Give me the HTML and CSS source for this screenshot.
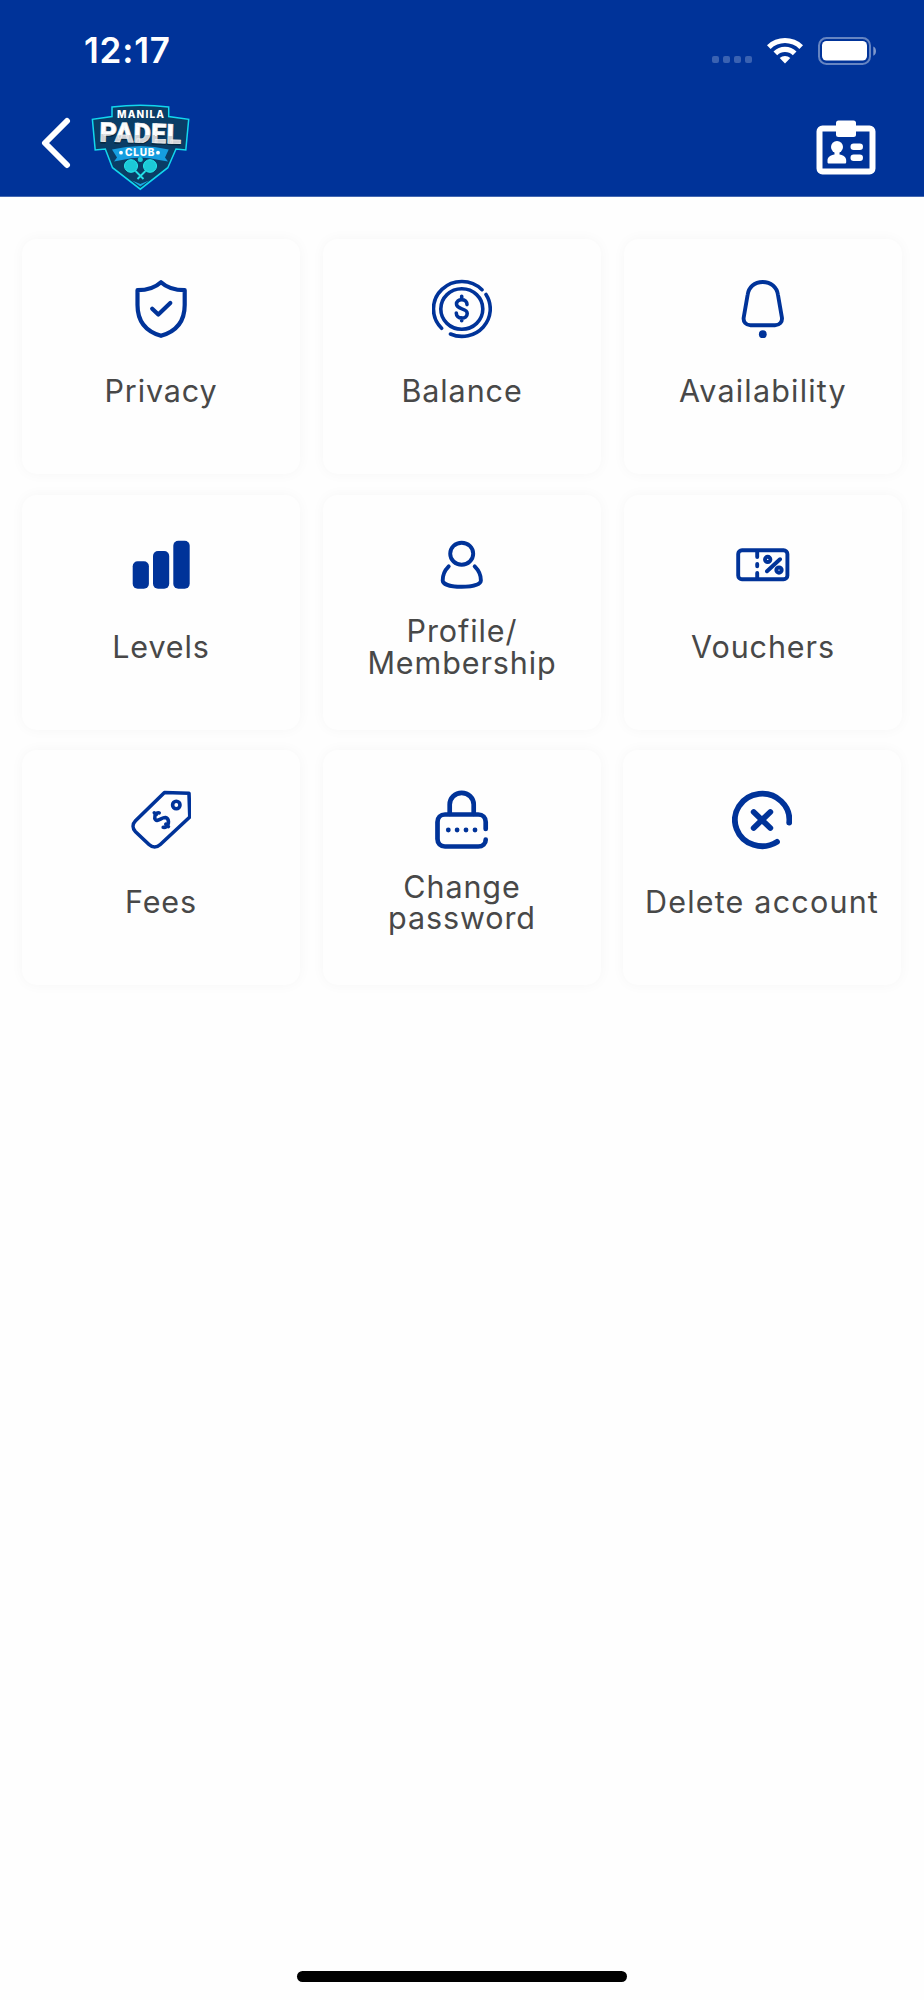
FILE: index.html
```html
<!DOCTYPE html>
<html lang="en">
<head>
  <meta charset="UTF-8">
  <meta name="viewport" content="width=device-width, initial-scale=1.0">
  <title>Manila Padel Club</title>
  <link rel="stylesheet" href="styles.css">
</head>
<body>
  <header class="header">
    <div class="status-bar">
      <span class="time">12:17</span>
      <div class="status-icons">
        <div class="signal"><i></i><i></i><i></i><i></i></div>
        <svg class="wifi" viewBox="0 0 36 27">
          <path d="M0 8.200a26 26 0 0 1 36 0l-3.600 3.700a20.500 20.500 0 0 0-28.800 0z"/>
          <path d="M6.500 14.500a16.500 16.500 0 0 1 23 0l-3.700 3.700a11.200 11.200 0 0 0-15.600 0z"/>
          <path d="M12.700 21a7.800 7.800 0 0 1 10.600 0L18 26.500z"/>
        </svg>
        <svg class="battery" viewBox="0 0 59 28">
          <rect class="shell" x="1" y="1" width="51" height="26" rx="7.500"/>
          <rect x="4" y="4" width="45" height="19.500" rx="4.500"/>
          <path class="tip" d="M55.300 9.500c3.600 1.500 3.600 7.800 0 9.300z"/>
        </svg>
      </div>
    </div>
    <div class="nav-bar">
      <svg class="back" viewBox="0 0 30 52">
        <path d="M26 4L4 26l22 22"/>
      </svg>
      <svg class="logo" viewBox="0 0 100 88">
        <defs>
          <linearGradient id="silver" x1="0" y1="0" x2="0" y2="1">
            <stop offset="0.55" stop-color="#ffffff"/>
            <stop offset="0.55" stop-color="#cfd2d6"/>
          </linearGradient>
        </defs>
        <path class="crest" d="M21 2.900Q49.300-.300 77.700 2.900V12.500L97.700 15.300 94.800 46 85 45 76.800 63.700 49.300 85.200 21.500 63.700 14.300 45 4.200 46 1.400 15.300 21 12.500z"/>
        <text class="logo-manila" x="26" y="13.800" textLength="47">MANILA</text>
        <g transform="rotate(1.500 49 30)">
          <text class="logo-padel shade" x="8.500" y="40" textLength="81.500">PADEL</text>
          <text class="logo-padel" x="8.500" y="38.500" textLength="81.500">PADEL</text>
        </g>
        <path class="ribbon" d="M21 45.500Q49.300 38.500 77.700 45.500L74 53.500 77 57.500 68 56Q49.300 51 31 56L23 57.500 26 53.500z"/>
        <circle class="dot" cx="30" cy="48.700" r="1.900"/>
        <circle class="dot" cx="67" cy="48.700" r="1.900"/>
        <text class="logo-club" x="34" y="52" textLength="29.500">CLUB</text>
        <circle class="ball" cx="49.300" cy="55.500" r="2.500"/>
        <path class="handle" d="M44.500 67l8 8M54.500 67l-8 8"/>
        <ellipse class="racket" cx="40" cy="62" rx="6.500" ry="6.300"/>
        <ellipse class="racket" cx="59" cy="62" rx="6.500" ry="6.300"/>
        <path class="chevron" d="M41 76.500l8.300 3.500 8.700-3.500-8.700 6z"/>
      </svg>
      <svg class="id-card" viewBox="0 0 60 56">
        <rect class="frame" x="3.500" y="8.500" width="53" height="43" rx="3"/>
        <rect x="20" y="0.500" width="20" height="16.500" rx="2.500"/>
        <circle cx="21" cy="27" r="6"/>
        <path d="M18.500 30h5v4.500c4 .500 6.700 2.500 6.700 6v1.500c0 1-.500 1.500-1.500 1.500H13c-1 0-1.500-.500-1.500-1.500v-1.500c0-3.500 3-5.500 7-6z"/>
        <rect x="34.500" y="23.500" width="12.500" height="6.500" rx="3.200"/>
        <rect x="34.500" y="34.500" width="12.500" height="6.500" rx="3.200"/>
      </svg>
    </div>
  </header>

  <main class="menu">
    <a class="card">
      <svg class="icon" viewBox="0 0 60 60" stroke-width="4.200">
        <path d="M30 3.200C24 8.800 16.500 11.200 6.500 11.200V26C6.500 42 15 52.500 30 56.800 45 52.500 53.700 42 53.700 26V11.200C43.500 11.200 36 8.800 30 3.200z"/>
        <path d="M21.200 29.700l6.100 5.800 12-11.500"/>
      </svg>
      <span class="label">Privacy</span>
    </a>
    <a class="card">
      <svg class="icon" viewBox="0 0 60 60" stroke-width="3.600">
        <path d="M50 10.700A28 27.200 0 0 0 9.600 49.300"/>
        <path d="M54 15.500A28.300 27.400 0 0 1 18.500 55"/>
        <ellipse cx="29.800" cy="30" rx="21" ry="20.300"/>
        <path d="M29.700 17.300v3M29.700 38.800v3M35 25.600c0-3-2-5-5.300-5-3 0-5.200 1.800-5.200 4.500 0 6 10.700 3.500 10.700 9.300 0 2.800-2.200 4.700-5.400 4.700-3.300 0-5.500-2-5.500-5"/>
      </svg>
      <span class="label">Balance</span>
    </a>
    <a class="card">
      <svg class="icon" viewBox="0 0 60 60" stroke-width="3.900">
        <path d="M29.700 3C21.500 3 15.700 8.200 14.600 16L10.700 38.500C10 43 13 46.200 17.500 46.200H42C46.500 46.200 49.600 43 48.900 38.500L45 16C43.900 8.200 37.900 3 29.700 3z"/>
        <circle class="solid" cx="29.800" cy="55.200" r="3.900"/>
      </svg>
      <span class="label wide">Availability</span>
    </a>

    <a class="card">
      <svg class="icon" viewBox="0 0 60 60">
        <rect class="solid" x="1.700" y="26.300" width="16.200" height="27.400" rx="5"/>
        <rect class="solid" x="22" y="16" width="16.200" height="37.700" rx="5"/>
        <rect class="solid" x="42.300" y="5.700" width="16.400" height="48" rx="5"/>
      </svg>
      <span class="label">Levels</span>
    </a>
    <a class="card">
      <svg class="icon" viewBox="0 0 60 60" stroke-width="3.900">
        <ellipse cx="29.700" cy="18.700" rx="11.500" ry="11"/>
        <path d="M16.700 31.300C12.500 35.500 10.600 40 10.700 45.500 11 49.500 19 51.800 29.700 51.800S48.700 49.500 48.900 45.500C49 40 46.900 35.500 42.700 31.300"/>
      </svg>
      <span class="label">Profile/<br>Membership</span>
    </a>
    <a class="card">
      <svg class="icon" viewBox="0 0 60 60" stroke-width="3.900">
        <rect x="5.200" y="15.200" width="49.200" height="29" rx="3.800"/>
        <path d="M24.200 16v6M24.200 28.900v2.400M24.200 37.900v6M47 24.200L34 36.300"/>
        <ellipse cx="34.700" cy="24.400" rx="2.700" ry="2.600"/>
        <ellipse cx="46" cy="35.100" rx="2.700" ry="2.600"/>
      </svg>
      <span class="label">Vouchers</span>
    </a>

    <a class="card">
      <svg class="icon" viewBox="0 0 60 60" stroke-width="3.600">
        <path d="M33.500 2.500L58 3.200 58.800 27 29.300 54.500C26 57.700 21.300 57.700 18 54.500L4.500 41.700C1.300 38.500 1.300 34 4.500 30.800z"/>
        <circle cx="45.300" cy="15" r="3.700"/>
        <path d="M23.300 22.800l2 1.800M28.200 22.900C25.500 22.200 23.300 24.500 23.800 28.500 25.500 33.500 30.500 27 34.500 27.500 38.500 28.500 38 34.500 35.500 36.500 34.500 37.300 33.500 37.500 32.200 37.300M34.800 34.200l2.600 2.300"/>
      </svg>
      <span class="label">Fees</span>
    </a>
    <a class="card">
      <svg class="icon" viewBox="0 0 60 60" stroke-width="4.700">
        <path d="M17.700 24V14.500a12 11.700 0 0 1 24 0V24"/>
        <path d="M53.700 39V32c0-4.500-3-7.500-7.500-7.500H13c-4.500 0-7.500 3-7.500 7.500v17c0 4.500 3 7.500 7.500 7.500h33.200c4.500 0 7.500-2.800 7.500-6.800"/>
        <g class="solid">
          <circle cx="16.300" cy="40" r="2.400"/>
          <circle cx="25.100" cy="40" r="2.400"/>
          <circle cx="34" cy="40" r="2.400"/>
          <circle cx="43" cy="40" r="2.400"/>
        </g>
      </svg>
      <span class="label">Change<br>password</span>
    </a>
    <a class="card card-delete">
      <svg class="icon" viewBox="0 0 60 60" stroke-width="5.800">
        <path d="M57.200 32.700A27.200 26.200 0 1 0 45 51.900"/>
        <path d="M21.700 22l16.600 16M38.300 22L21.700 38"/>
      </svg>
      <span class="label wide">Delete account</span>
    </a>
  </main>

  <div class="home-indicator"></div>
</body>
</html>
```
FILE: styles.css
```css
* {
  box-sizing: border-box;
}

body {
  margin: 0;
  height: 2000px;
  display: flex;
  flex-direction: column;
  background-color: #fefefe;
  font-family: Inter, "Liberation Sans", sans-serif;
}

/* Header */
.header {
  height: 197px;
  background-color: #003399;
  border-bottom: 1px solid #4468b0;
}

.status-bar {
  display: flex;
  justify-content: space-between;
  height: 100px;
  padding: 37px 47px 0 84px;
}

.time {
  color: white;
  font-size: 35px;
  font-weight: 600;
  line-height: 27px;
  letter-spacing: 0.8px;
}

.status-icons {
  display: flex;
  align-items: flex-start;
}

.signal {
  display: flex;
  gap: 4px;
  margin: 19px 15px 0 0;
}

.signal i {
  width: 7px;
  height: 7px;
  border-radius: 2px;
  background-color: #3a62b2;
}

.wifi {
  width: 36px;
  height: 27px;
  margin-right: 15px;
  fill: white;
}

.battery {
  width: 59px;
  height: 28px;
  fill: white;
}

.battery .shell {
  fill: none;
  stroke: #6685c2;
  stroke-width: 2;
}

.battery .tip {
  fill: #7f99cc;
}

.nav-bar {
  display: flex;
  align-items: flex-start;
  padding: 4px 48px 0 41px;
}

.back {
  width: 30px;
  height: 52px;
  margin-top: 13px;
  fill: none;
  stroke: white;
  stroke-width: 6;
  stroke-linecap: round;
  stroke-linejoin: round;
}

.logo {
  width: 100px;
  height: 88px;
  margin-left: 20px;
}

.id-card {
  width: 60px;
  height: 56px;
  margin: 16px 0 0 auto;
  fill: white;
}

.id-card .frame {
  fill: none;
  stroke: white;
  stroke-width: 6;
}

/* Logo */
.crest {
  fill: #0a3d66;
  stroke: #12d8ee;
  stroke-width: 1.5;
}

.logo text {
  font-weight: 800;
  fill: white;
}

.logo-manila {
  font-size: 10px;
}

.logo .logo-padel {
  font-family: Roboto, sans-serif;
  font-size: 27px;
  font-weight: 900;
  fill: url(#silver);
  stroke: #f4f4f4;
  stroke-width: 0.6;
}

.logo .logo-padel.shade {
  fill: #06283f;
  stroke: #06283f;
}

.logo-club {
  font-size: 10px;
}

.ribbon {
  fill: #159ee0;
}

.dot {
  fill: white;
}

.ball,
.racket {
  fill: #1cc9d8;
}

.racket {
  stroke: #25eef0;
}

.handle {
  stroke: #25e0e8;
  stroke-width: 1.8;
}

.chevron {
  fill: #1aa6e4;
}

/* Menu */
.menu {
  flex: 1;
  display: grid;
  grid-template-columns: repeat(3, 278px);
  grid-auto-rows: 235px;
  align-content: start;
  gap: 20.5px 23px;
  padding: 42px 22px 0;
}

.card {
  display: flex;
  flex-direction: column;
  align-items: center;
  padding-top: 40px;
  border-radius: 15px;
  background-color: #fefefe;
  box-shadow: 0 0 14px rgba(0, 0, 0, 0.035);
}

.card-delete {
  margin: 0 1px 0 -1px;
}

.icon {
  width: 60px;
  height: 60px;
  fill: none;
  stroke: #003399;
  stroke-linecap: round;
  stroke-linejoin: round;
}

.icon .solid {
  fill: #003399;
  stroke: none;
}

.label {
  display: flex;
  align-items: center;
  height: 62px;
  margin-top: 21px;
  color: #484848;
  font-size: 30.5px;
  font-weight: 400;
  line-height: 31.5px;
  letter-spacing: 0.9px;
  text-align: center;
  white-space: nowrap;
}

.label.wide {
  letter-spacing: 1.2px;
}

.home-indicator {
  width: 330px;
  height: 11px;
  margin: 0 auto 18px;
  border-radius: 6px;
  background-color: black;
}
```
